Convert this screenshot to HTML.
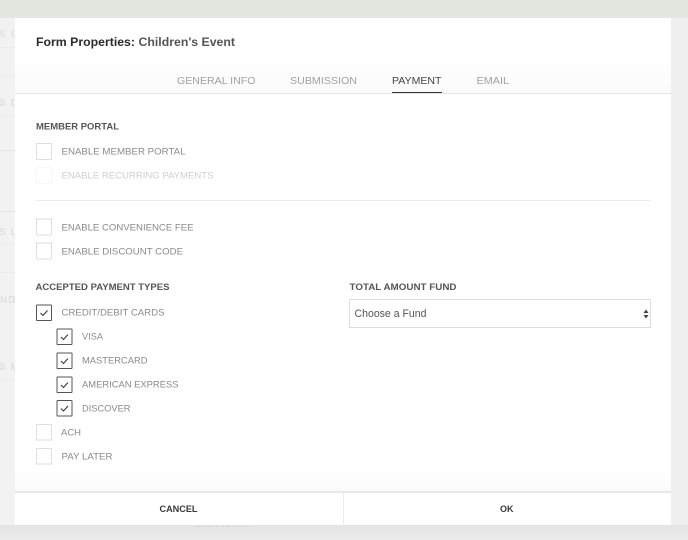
<!DOCTYPE html>
<html><head><meta charset="utf-8"><title>Form Properties</title>
<style>
html,body{margin:0;padding:0;width:688px;height:540px;overflow:hidden;background:#f1f1f2}
svg{display:block;filter:blur(.25px)}
text{font-family:"Liberation Sans",sans-serif}
.l{font-size:9.5px;fill:#8a8a8a}
.h{font-size:9.5px;fill:#555;font-weight:bold}
.t{font-size:10.5px;fill:#a0a0a0}
.bg{font-size:10px;fill:#e0e0e2;font-weight:bold;letter-spacing:1px}
.off{fill:#fff;stroke:#dedede;stroke-width:1}
.on{fill:#fff;stroke:#555;stroke-width:1}
.ck{fill:none;stroke:#333;stroke-width:1}
</style></head><body>
<svg width="688" height="540" viewBox="0 0 688 540" xmlns="http://www.w3.org/2000/svg">
<defs>
<linearGradient id="sh" x1="0" y1="0" x2="0" y2="1"><stop offset="0" stop-color="#e4e4e4"/><stop offset="1" stop-color="#ececec"/></linearGradient>
<linearGradient id="tb" x1="0" y1="0" x2="0" y2="1"><stop offset="0" stop-color="#fff"/><stop offset="1" stop-color="#fafafa"/></linearGradient>
</defs>
<rect width="688" height="540" fill="#f2f2f3"/>
<rect x="671" y="18" width="17" height="522" fill="#efefef"/>
<rect y="525" width="688" height="15" fill="url(#sh)"/>
<rect width="688" height="18" fill="#e2e7df"/>
<text class="bg" x="-1" y="37">S GE</text>
<text class="bg" x="-1" y="106">S DA</text>
<text class="bg" x="-1" y="235">S LA</text>
<text class="bg" x="0" y="303">ND</text>
<text class="bg" x="-1" y="370">S M</text>
<path d="M0 47.5H15M0 75.5H15M0 115.5H15M0 244.5H15M0 272.5H15M0 380.5H15" stroke="#ececee"/>
<path d="M0 150.5H15M0 211.5H15" stroke="#e2e4f2"/>
<text x="196" y="527" font-size="9" fill="#d6d6d6" textLength="54" lengthAdjust="spacingAndGlyphs">LAST NAME</text>

<rect x="15" y="18" width="656" height="507" fill="#fff"/>
<rect x="15" y="60" width="656" height="33" fill="url(#tb)"/>
<rect x="15" y="93" width="656" height="1" fill="#e6e6e6"/>

<text x="36" y="46" font-size="11.5" font-weight="bold" fill="#2b2b2b" textLength="99" lengthAdjust="spacingAndGlyphs">Form Properties:</text>
<text x="138.5" y="46" font-size="11.5" font-weight="bold" fill="#555" textLength="96.5" lengthAdjust="spacingAndGlyphs">Children's Event</text>

<text class="t" x="177" y="84" textLength="78.5" lengthAdjust="spacingAndGlyphs">GENERAL INFO</text>
<text class="t" x="290" y="84" textLength="67" lengthAdjust="spacingAndGlyphs">SUBMISSION</text>
<text class="t" x="392" y="84" textLength="49.5" lengthAdjust="spacingAndGlyphs" style="fill:#444">PAYMENT</text>
<text class="t" x="476.5" y="84" textLength="32.5" lengthAdjust="spacingAndGlyphs">EMAIL</text>
<rect x="392" y="92" width="50" height="1" fill="#333"/>

<text class="h" x="36" y="129.5" textLength="83" lengthAdjust="spacingAndGlyphs">MEMBER PORTAL</text>
<rect class="off" x="36.5" y="143.5" width="15" height="16"/>
<text class="l" x="61.5" y="154.7" textLength="124" lengthAdjust="spacingAndGlyphs">ENABLE MEMBER PORTAL</text>
<rect x="36.5" y="167.5" width="15" height="16" fill="#fff" stroke="#f8f8f8"/>
<text class="l" x="61.5" y="178.7" textLength="152" lengthAdjust="spacingAndGlyphs" style="fill:#cfcfcf">ENABLE RECURRING PAYMENTS</text>
<rect x="36" y="200" width="615" height="1" fill="#ececec"/>

<rect class="off" x="36.5" y="219" width="15" height="16"/>
<text class="l" x="61.5" y="230.7" textLength="132" lengthAdjust="spacingAndGlyphs">ENABLE CONVENIENCE FEE</text>
<rect class="off" x="36.5" y="243" width="15" height="16"/>
<text class="l" x="61.5" y="254.7" textLength="121.5" lengthAdjust="spacingAndGlyphs">ENABLE DISCOUNT CODE</text>

<text class="h" x="35.5" y="290" textLength="134" lengthAdjust="spacingAndGlyphs">ACCEPTED PAYMENT TYPES</text>
<text class="h" x="349.5" y="290" textLength="107" lengthAdjust="spacingAndGlyphs">TOTAL AMOUNT FUND</text>

<rect class="on" x="36.5" y="305" width="15" height="15.5" rx=".5"/>
<path class="ck" d="M40.5 313L43 315.5L47.5 310.5"/>
<text class="l" x="61.5" y="315.7" textLength="103" lengthAdjust="spacingAndGlyphs">CREDIT/DEBIT CARDS</text>

<rect class="on" x="57" y="329" width="15" height="15.5" rx=".5"/>
<path class="ck" d="M61 337L63.5 339.5L68 334.5"/>
<text class="l" x="82" y="339.7" textLength="21" lengthAdjust="spacingAndGlyphs">VISA</text>

<rect class="on" x="57" y="353" width="15" height="15.5" rx=".5"/>
<path class="ck" d="M61 361L63.5 363.5L68 358.5"/>
<text class="l" x="82" y="363.7" textLength="65.5" lengthAdjust="spacingAndGlyphs">MASTERCARD</text>

<rect class="on" x="57" y="377" width="15" height="15.5" rx=".5"/>
<path class="ck" d="M61 385L63.5 387.5L68 382.5"/>
<text class="l" x="82" y="387.7" textLength="96.5" lengthAdjust="spacingAndGlyphs">AMERICAN EXPRESS</text>

<rect class="on" x="57" y="400.5" width="15" height="15.5" rx=".5"/>
<path class="ck" d="M61 408.5L63.5 411L68 406"/>
<text class="l" x="82" y="411.7" textLength="48.5" lengthAdjust="spacingAndGlyphs">DISCOVER</text>

<rect class="off" x="36.5" y="424.5" width="15" height="15.5"/>
<text class="l" x="61" y="435.7" textLength="20" lengthAdjust="spacingAndGlyphs">ACH</text>
<rect class="off" x="36.5" y="448.5" width="15" height="15.5"/>
<text class="l" x="61.5" y="459.7" textLength="51" lengthAdjust="spacingAndGlyphs">PAY LATER</text>

<rect x="349.5" y="299.5" width="301" height="28" fill="#fff" stroke="#dcdcdc"/>
<text x="354.5" y="317" font-size="11" fill="#555" textLength="72" lengthAdjust="spacingAndGlyphs">Choose a Fund</text>
<path d="M643.5 313L646 309.5L648.5 313ZM643.5 315L646 318.5L648.5 315Z" fill="#444"/>

<rect x="15" y="470" width="656" height="21" fill="url(#tb)"/>
<rect x="15" y="491" width="656" height="2" fill="#e8e8e8"/>
<rect x="343" y="493" width="1" height="32" fill="#ececec"/>
<text x="159.5" y="512" font-size="9.5" font-weight="bold" fill="#3a3a3a" textLength="38" lengthAdjust="spacingAndGlyphs">CANCEL</text>
<text x="500" y="512" font-size="9.5" font-weight="bold" fill="#3a3a3a" textLength="13.5" lengthAdjust="spacingAndGlyphs">OK</text>
</svg>
</body></html>
